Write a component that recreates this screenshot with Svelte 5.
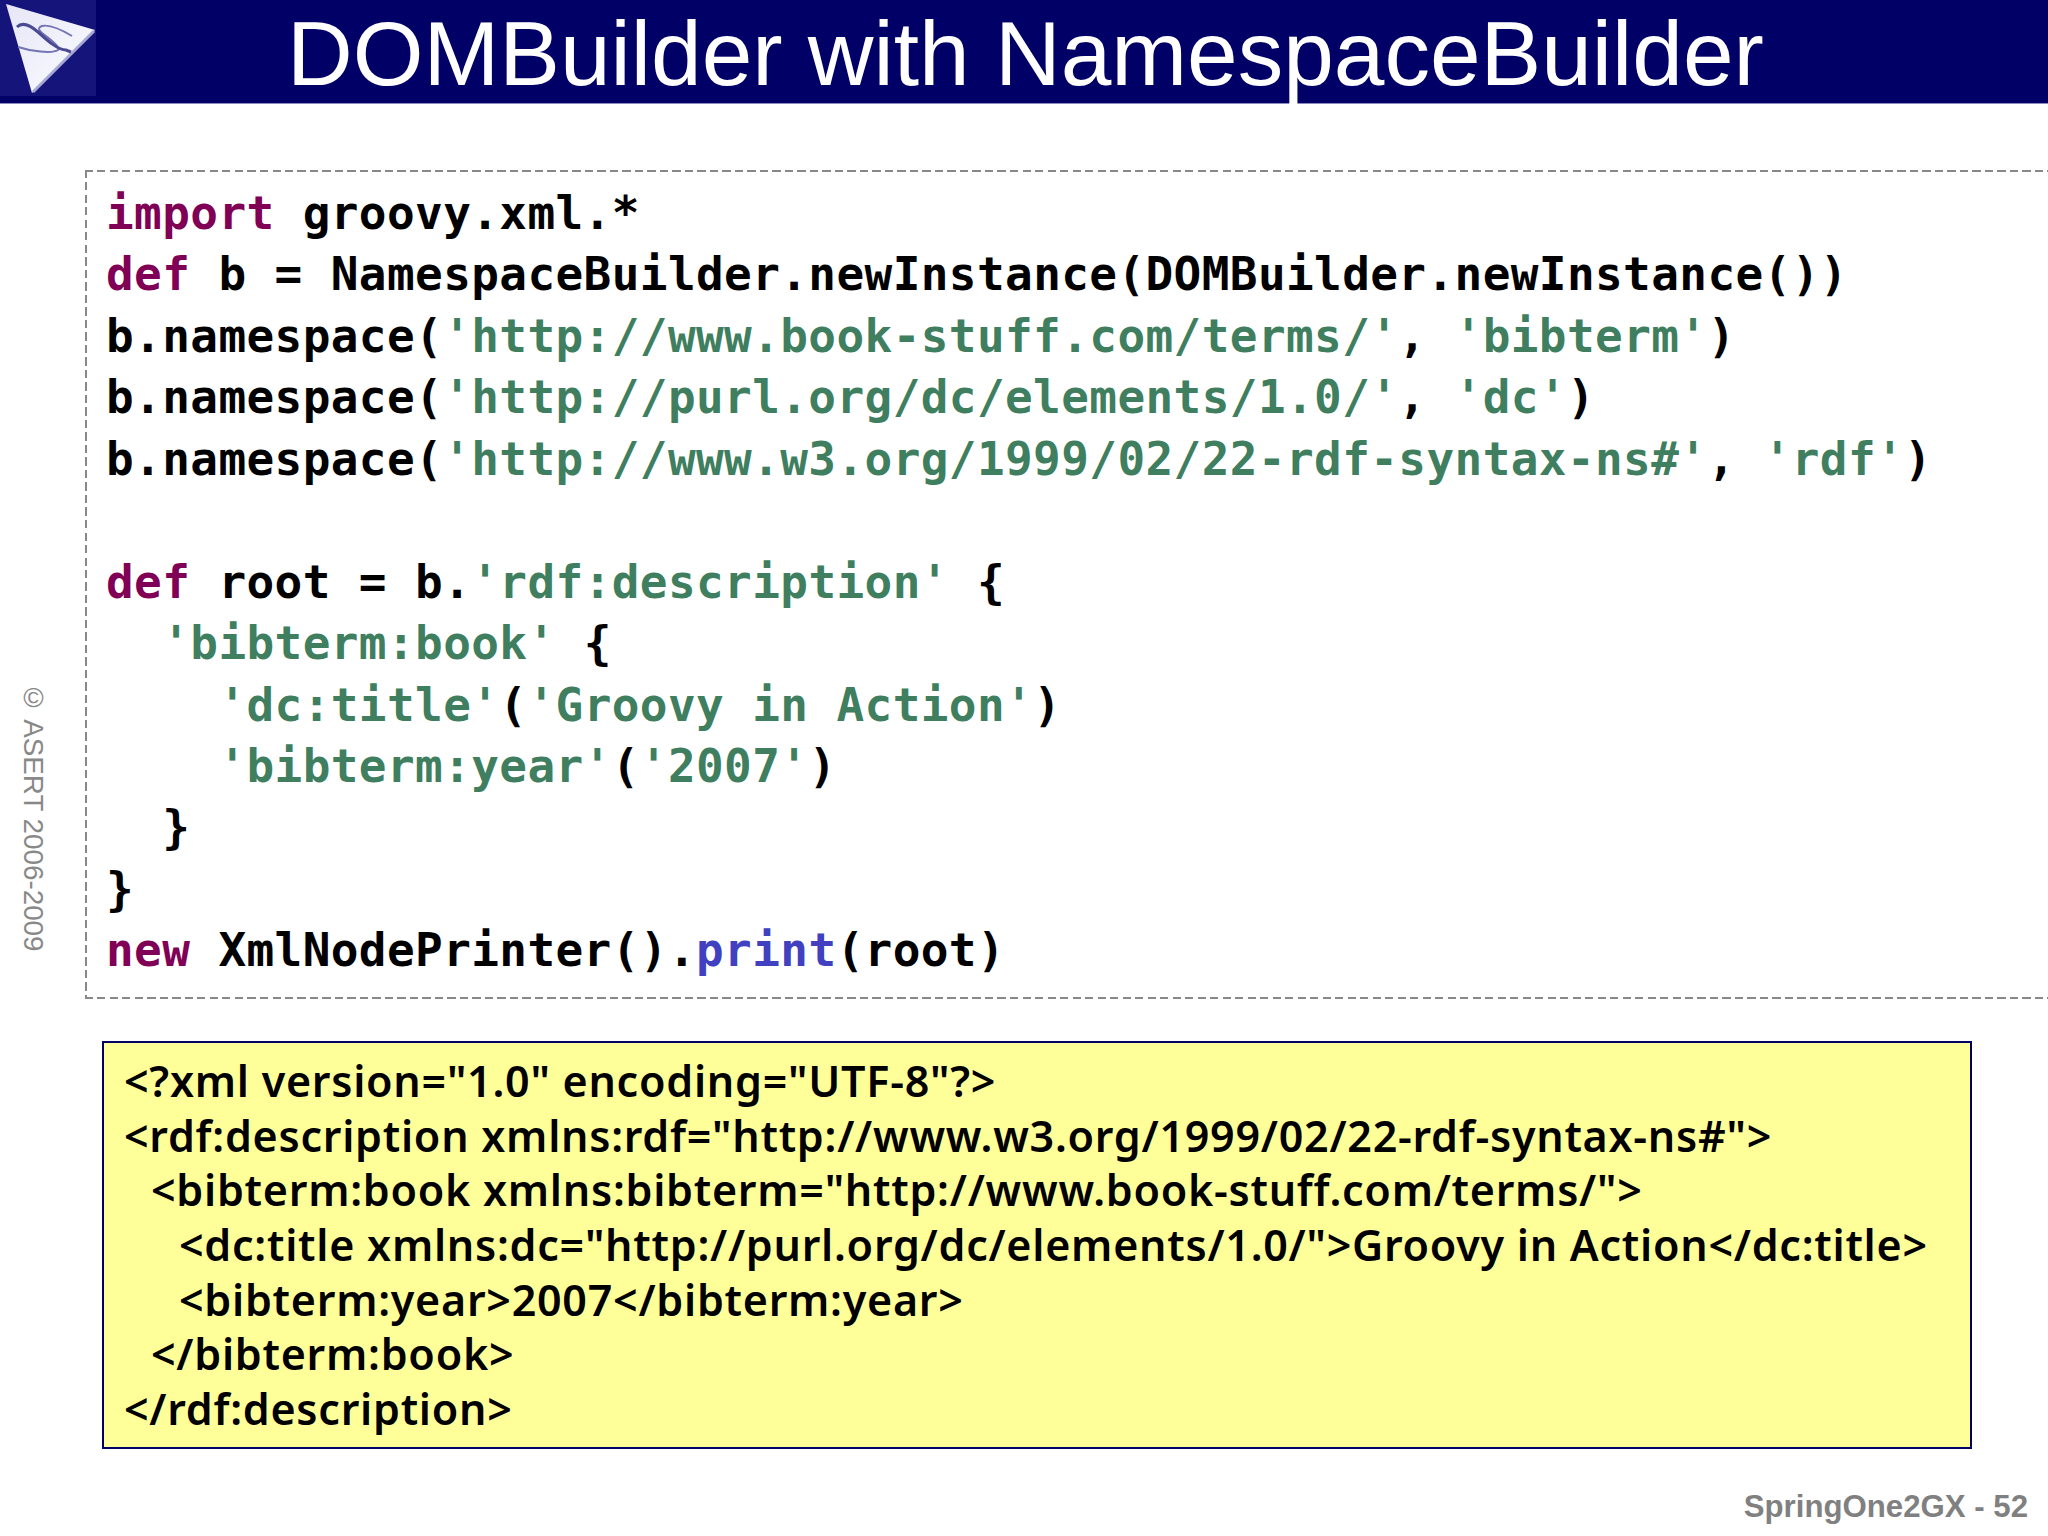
<script>
  const code = [
    [['k','import'],['n',' groovy.xml.*']],
    [['k','def'],['n',' b = NamespaceBuilder.newInstance(DOMBuilder.newInstance())']],
    [['n','b.namespace('],['s',"'http://www.book-stuff.com/terms/'"],['n',', '],['s',"'bibterm'"],['n',')']],
    [['n','b.namespace('],['s',"'http://purl.org/dc/elements/1.0/'"],['n',', '],['s',"'dc'"],['n',')']],
    [['n','b.namespace('],['s',"'http://www.w3.org/1999/02/22-rdf-syntax-ns#'"],['n',', '],['s',"'rdf'"],['n',')']],
    [['n',' ']],
    [['k','def'],['n',' root = b.'],['s',"'rdf:description'"],['n',' {']],
    [['n','  '],['s',"'bibterm:book'"],['n',' {']],
    [['n','    '],['s',"'dc:title'"],['n','('],['s',"'Groovy in Action'"],['n',')']],
    [['n','    '],['s',"'bibterm:year'"],['n','('],['s',"'2007'"],['n',')']],
    [['n','  }']],
    [['n','}']],
    [['k','new'],['n',' XmlNodePrinter().'],['m','print'],['n','(root)']]
  ];
  const xml = [
    [0,'<?xml version="1.0" encoding="UTF-8"?>'],
    [0,'<rdf:description xmlns:rdf="http://www.w3.org/1999/02/22-rdf-syntax-ns#">'],
    [1,'<bibterm:book xmlns:bibterm="http://www.book-stuff.com/terms/">'],
    [2,'<dc:title xmlns:dc="http://purl.org/dc/elements/1.0/">Groovy in Action</dc:title>'],
    [2,'<bibterm:year>2007</bibterm:year>'],
    [1,'</bibterm:book>'],
    [0,'</rdf:description>']
  ];
</script>

<div class="slide">
  <header class="bar">
    <svg class="logo" viewBox="0 0 96 96" width="96" height="96" aria-hidden="true">
      <defs>
        <linearGradient id="tri" x1="0" y1="0" x2="1" y2="1">
          <stop offset="0" stop-color="#e6e6f6"/>
          <stop offset="0.7" stop-color="#f6f6fd"/>
          <stop offset="1" stop-color="#d4d4ec"/>
        </linearGradient>
      </defs>
      <rect width="96" height="96" fill="#14147a"/>
      <polygon points="6,4 95,30 32,93" fill="url(#tri)"/>
      <line x1="94" y1="31" x2="33" y2="92" stroke="#a8a8d4" stroke-width="3"/>
      <path d="M72 36 C62 30 50 24 42 26 C36 28 40 32 46 36 C54 42 60 48 58 50 C52 54 30 51 18 47" fill="none" stroke="#7474b4" stroke-width="2"/>
      <path d="M17 27 C22 22 30 25 38 32 C48 41 58 50 66 50 L71 52" fill="none" stroke="#4a4a92" stroke-width="3"/>
    </svg>
    <h1>DOMBuilder with NamespaceBuilder</h1>
  </header>

  <div class="middle">
    <aside class="copy">© ASERT 2006-2009</aside>
    <div class="content">
      <pre class="code">{#each code as line}<div class="cl">{#each line as t}<span class={t[0]}>{t[1]}</span>{/each}</div>{/each}</pre>
      <div class="xml">
        {#each xml as l}
          <div class="xl i{l[0]}">{l[1]}</div>
        {/each}
      </div>
    </div>
  </div>

  <footer class="foot">SpringOne2GX - 52</footer>
</div>

<style>
  :global(body) { margin: 0; background: #fff; overflow: hidden; }
  .slide { width: 2048px; height: 1536px; display: flex; flex-direction: column; overflow: hidden; background: #fff; }
  .bar { height: 103px; flex: none; background: #000066; border-bottom: 1px solid #8a8abc; display: flex; align-items: flex-start; }
  .logo { flex: none; }
  h1 { margin: 0; padding-left: 191px; font: 400 91px/107px "Liberation Sans", Arial, sans-serif; color: #fff; white-space: nowrap; }
  .middle { flex: 1; display: flex; padding-top: 66px; min-height: 0; }
  .copy { flex: none; width: 85px; box-sizing: border-box; writing-mode: vertical-rl; padding-top: 512px; padding-right: 36px; font: 400 27.8px/32px "Liberation Sans", Arial, sans-serif; color: #888; white-space: nowrap; }
  .content { flex: 1; min-width: 0; }
  .code {
    margin: 0; width: 2100px; height: 829px; box-sizing: border-box; padding: 13px 0 0 21px;
    font: 700 46px/61.45px "DejaVu Sans Mono", monospace; letter-spacing: 0.4px; color: #000;
    background:
      repeating-linear-gradient(90deg, #888 0 8px, transparent 8px 12.5px) top left / 100% 2px no-repeat,
      repeating-linear-gradient(90deg, #888 0 8px, transparent 8px 12.5px) bottom left / 100% 2px no-repeat,
      repeating-linear-gradient(180deg, #888 0 8px, transparent 8px 12.5px) top left / 2px 100% no-repeat;
  }
  .cl { height: 61.45px; white-space: pre; }
  .k { color: #7f0055; }
  .s { color: #3f7f5f; }
  .m { color: #4040c0; }
  .xml {
    margin: 42px 0 0 17px; width: 1870px; height: 408px; box-sizing: border-box; padding: 11px 0 0 20px;
    background: #ffff99; border: 2px solid #000066;
    font: 600 43px/54.64px "Noto Sans", sans-serif; letter-spacing: 0.75px; color: #000;
  }
  .xl { white-space: nowrap; }
  .i1 { padding-left: 27px; }
  .i2 { padding-left: 55px; }
  .foot { flex: none; height: 56px; box-sizing: border-box; padding: 8px 20px 0 0; text-align: right; font: 700 31.2px/38px "Liberation Sans", Arial, sans-serif; color: #808080; }
</style>
